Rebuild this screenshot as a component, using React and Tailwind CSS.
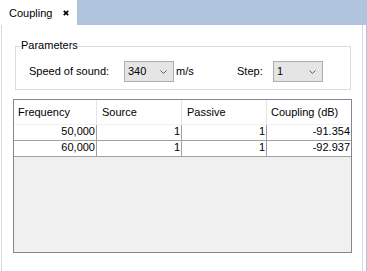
import React from "react";

const font = { fontFamily: '"Liberation Sans", Arial, sans-serif' };

const Chevron = () => (
    <svg width="7" height="4" viewBox="0 0 7 4" className="block">
        <polyline points="0.5,0.5 3.5,3.5 6.5,0.5" fill="none" stroke="#606060" strokeWidth="1" />
    </svg>
);

const Combo = ({ value }) => (
    <div className="relative w-[50px] h-[21px] border border-[#adadad] bg-[#e5e5e5] flex items-center pl-[3px]">
        <span className="leading-[13px]">{value}</span>
        {/* dropdown arrow */}
        <div className="absolute left-[35px] top-[8px]">
            <Chevron />
        </div>
    </div>
);

const columns = [
    { name: "Frequency", width: "w-[83px] pl-[4px] border-r", cell: "w-[83px] border-r" },
    { name: "Source", width: "w-[85px] pl-[5px] border-r", cell: "w-[85px] border-r" },
    { name: "Passive", width: "w-[85px] pl-[5px] border-r", cell: "w-[85px] border-r" },
    { name: "Coupling (dB)", width: "w-[84px] pl-[4px]", cell: "w-[84px]" },
];

const rows = [
    ["50,000", "1", "1", "-91.354"],
    ["60,000", "1", "1", "-92.937"],
];

export default function App() {
    return (
        <div className="w-[367px] h-[271px] bg-white text-black text-[11px] overflow-hidden" style={font}>
            {/* Tab strip */}
            <div className="flex h-[25px]">
                <div className="w-[77px] bg-white flex items-center pl-[9px] pt-px">
                    <span className="leading-[13px]">Coupling</span>
                    <svg width="6" height="6" viewBox="0 0 6 6" className="ml-[11px] mb-[1px]">
                        <path d="M0.8 0.8 L5.2 5.2 M5.2 0.8 L0.8 5.2" stroke="#000" strokeWidth="1.7" />
                    </svg>
                </div>
                <div className="flex-1 bg-[#b0c4de]" />
            </div>

            {/* Panel */}
            <div className="flex h-[246px]">
                <div className="w-px" />
                <div className="w-[362px] border-l border-r border-[#dadada]">
                    {/* Parameters group */}
                    <div className="relative ml-[13px] mt-[21px] w-[336px] h-[44px] border border-[#dcdcdc] pt-[14px] pl-[13px] flex items-start">
                        <span className="absolute left-[5px] top-[-8px] bg-white leading-[13px]">Parameters</span>
                        <span className="w-[95px] h-[21px] flex items-center leading-[13px]">Speed of sound:</span>
                        <Combo value="340" />
                        <span className="ml-[2px] w-[61px] h-[21px] flex items-center leading-[13px]">m/s</span>
                        <span className="w-[36px] h-[21px] flex items-center leading-[13px]">Step:</span>
                        <Combo value="1" />
                    </div>

                    {/* Results table */}
                    <div className="ml-[11px] mt-[9px] w-[339px] h-[154px] border border-[#828790] bg-[#f0f0f0]">
                        <div className="flex h-[25px] bg-white border-b border-[#f0f0f0]">
                            {columns.map((c) => (
                                <div key={c.name} className={`${c.width} border-[#e5e5e5] flex items-center pt-px leading-[13px]`}>
                                    {c.name}
                                </div>
                            ))}
                        </div>
                        {rows.map((r, i) => (
                            <div key={i} className="flex h-[16px] bg-white border-b border-[#a0a0a0]">
                                {r.map((v, j) => (
                                    <div key={j} className={`${columns[j].cell} border-[#a0a0a0] text-right pr-px leading-[12px]`}>
                                        {v}
                                    </div>
                                ))}
                            </div>
                        ))}
                    </div>
                </div>
                <div className="w-[3px]" />
                <div className="w-px bg-[#b0c4de]" />
            </div>
        </div>
    );
}
